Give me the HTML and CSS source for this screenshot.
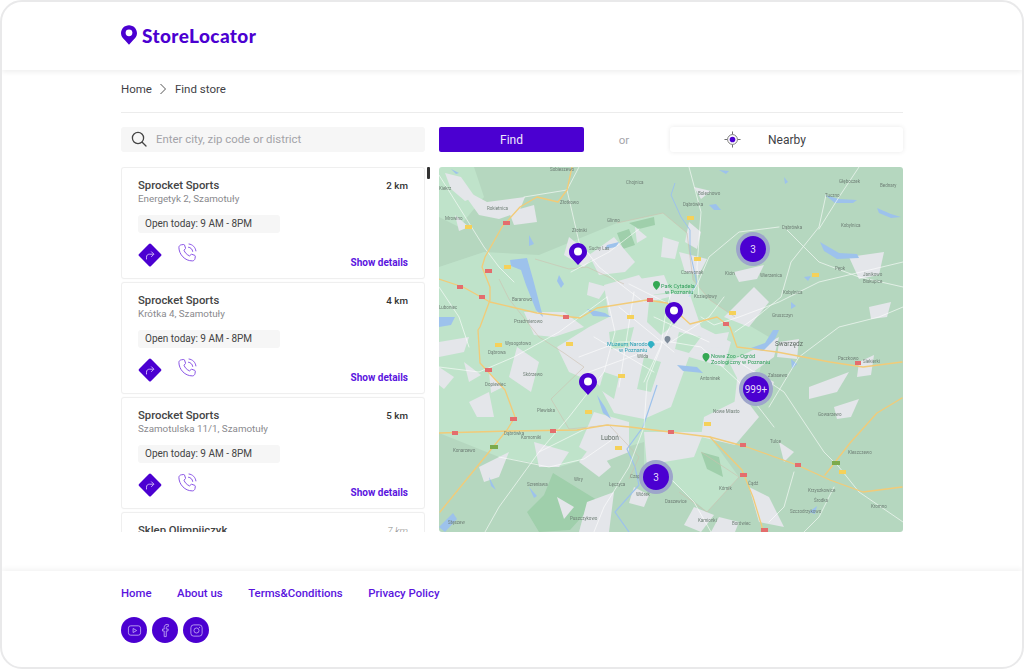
FILE: index.html
```html
<!DOCTYPE html>
<html lang="en">
<head>
<meta charset="utf-8">
<title>StoreLocator</title>
<link rel="stylesheet" href="styles.css">
</head>
<body>
<svg class="defs" width="0" height="0" aria-hidden="true">
  <symbol id="pin" viewBox="0 0 18 22"><path fill="#4b00d1" d="M9 0C4 0 0 4 0 9c0 3.4 1.8 5.4 4.2 7.7L9 22l4.8-5.300C16.200 14.400 18 12.400 18 9c0-5-4-9-9-9z"/><circle cx="9" cy="8.500" r="4" fill="#fff"/></symbol>
  <symbol id="go" viewBox="0 0 26 26"><rect x="4.500" y="4.500" width="17" height="17" rx="1.500" fill="#4b00d1" transform="rotate(45 13 13)"/><path d="M9.500 17v-1.800c0-2 1.200-3 3-3h4M14.500 9.800l2.400 2.400-2.400 2.400" fill="none" stroke="#c9b0f5" stroke-width="1" stroke-linecap="round" stroke-linejoin="round"/></symbol>
  <symbol id="phone" viewBox="0 0 20 20"><path d="M4.300 1.800 6.700 1.500c.4 0 .7.200.8.500l1 3c.1.300 0 .6-.2.800L7 7.200c.9 2.500 3 4.700 5.600 5.700l1.400-1.400c.2-.2.600-.3.900-.2l2.900 1.100c.3.100.5.500.5.800l-.3 2.400c-.2 1.200-1.300 2.300-2.600 2.300C8 18 1.900 11.500 1.900 4.300c0-1.200 1.100-2.300 2.400-2.500z" fill="none" stroke="#8a55e6" stroke-width="1"/><path d="M11.500 4.200c2.200.3 3.900 2 4.200 4.200M12 1c3.600.4 6.500 3.300 6.900 6.900" fill="none" stroke="#8a55e6" stroke-width="1" stroke-linecap="round"/></symbol>
</svg>
<div class="window">
  <header class="header">
    <div class="logo">
      <svg class="logo-pin" viewBox="0 0 18 22"><path fill="#4b00d1" d="M9 0C4 0 0 4 0 9c0 3.4 1.800 5.400 4.200 7.700L9 22l4.800-5.300C16.200 14.400 18 12.400 18 9c0-5-4-9-9-9z"/><circle cx="9" cy="8.500" r="3.800" fill="#fff"/></svg>
      <span class="logo-text">StoreLocator</span>
    </div>
  </header>

  <main class="main">
    <nav class="crumbs">
      <span>Home</span>
      <svg class="crumb-sep" viewBox="0 0 8 12"><path d="M1.500 1 6.500 6l-5 5" fill="none" stroke="#555" stroke-width="1"/></svg>
      <span>Find store</span>
    </nav>

    <div class="toolbar">
      <div class="search">
        <svg class="search-icon" viewBox="0 0 16 16"><circle cx="7" cy="7" r="5.600" fill="none" stroke="#444" stroke-width="1.300"/><path d="m11.200 11.200 3.800 3.800" stroke="#444" stroke-width="1.300" stroke-linecap="round"/></svg>
        <span>Enter city, zip code or district</span>
      </div>
      <div class="actions">
        <button class="find">Find</button>
        <span class="or">or</span>
        <button class="nearby">
          <svg class="target" viewBox="0 0 18 18"><circle cx="9" cy="9" r="5.200" fill="#fff" stroke="#777" stroke-width="1"/><circle cx="9" cy="9" r="3" fill="#4b00d1"/><path d="M9 .5v3M9 14.500v3M.5 9h3M14.500 9h3" stroke="#666" stroke-width="1"/></svg>
          <span>Nearby</span>
        </button>
      </div>
    </div>

    <div class="content">
      <div class="list-wrap">
        <div class="list">
          <article class="card">
            <div class="row"><h3>Sprocket Sports</h3><span class="km">2 km</span></div>
            <p class="addr">Energetyk 2, Szamotuły</p>
            <div class="hours">Open today: 9 AM - 8PM</div>
            <div class="foot">
              <div class="icons"><svg class="ic-go"><use href="#go"/></svg><svg class="ic-phone"><use href="#phone"/></svg></div>
              <a class="details">Show details</a>
            </div>
          </article>
          <article class="card">
            <div class="row"><h3>Sprocket Sports</h3><span class="km">4 km</span></div>
            <p class="addr">Krótka 4, Szamotuły</p>
            <div class="hours">Open today: 9 AM - 8PM</div>
            <div class="foot">
              <div class="icons"><svg class="ic-go"><use href="#go"/></svg><svg class="ic-phone"><use href="#phone"/></svg></div>
              <a class="details">Show details</a>
            </div>
          </article>
          <article class="card">
            <div class="row"><h3>Sprocket Sports</h3><span class="km">5 km</span></div>
            <p class="addr">Szamotulska 11/1, Szamotuły</p>
            <div class="hours">Open today: 9 AM - 8PM</div>
            <div class="foot">
              <div class="icons"><svg class="ic-go"><use href="#go"/></svg><svg class="ic-phone"><use href="#phone"/></svg></div>
              <a class="details">Show details</a>
            </div>
          </article>
          <article class="card">
            <div class="row"><h3>Sklep Olimpijczyk</h3><span class="km km-far">7 km</span></div>
          </article>
        </div>
        <div class="scroll-thumb"></div>
      </div>

      <div class="map">
        <svg class="map-art" viewBox="0 0 464 365" preserveAspectRatio="none">
          <rect width="464" height="365" fill="#b5d7bf"/>
          <g fill="#bfe3ca">
            <path d="M0 100 45 85 100 88 178 56 224 46 248 66 254 113 271 133 296 150 330 170 305 262 271 270 300 310 268 345 231 313 205 300 205 275 120 300 60 290 0 266z"/>
            <path d="M0 0 35 0 45 30 20 60 0 50z"/>
          </g>
          <g fill="#9fcfab">
            <path d="M114 306 158 333 131 363 100 365 88 345 105 328z"/>
            <path d="M190 56 215 50 216 58 200 62z"/>
            <path d="M178 66 190 62 196 78 184 82z"/>
            <path d="M262 285 280 290 284 310 268 302z"/>
          </g>
          <g fill="#e4e6ea">
            <path d="M165 118 200 108 215 128 250 125 262 160 292 175 285 200 250 190 232 240 205 252 175 246 160 218 130 205 118 180 150 160 170 150z"/>
            <path d="M150 88 175 70 196 95 186 105 160 108z"/>
            <path d="M20 20 48 35 86 30 80 45 60 52 40 48z"/>
            <path d="M6 6 22 10 36 30 26 34 12 22z"/>
            <path d="M85 145 125 145 145 160 115 170 95 168z"/>
            <path d="M0 175 30 170 25 185 0 190z"/>
            <path d="M240 85 268 92 260 108 246 105z"/>
            <path d="M224 70 240 75 236 92 222 90z"/>
            <path d="M250 55 262 65 258 82 246 75z"/>
            <path d="M150 115 168 120 160 132 148 128z"/>
            <path d="M200 112 225 108 232 125 212 128z"/>
            <path d="M285 150 315 120 330 135 310 160z"/>
            <path d="M295 105 325 98 318 112 300 115z"/>
            <path d="M340 175 360 172 358 192 338 190z"/>
            <path d="M410 90 445 85 440 108 420 112z"/>
            <path d="M78 180 100 195 92 225 70 210z"/>
            <path d="M25 195 42 208 30 215z"/>
            <path d="M30 235 50 225 55 250 38 250z"/>
            <path d="M95 275 130 285 120 300 100 300z"/>
            <path d="M155 245 190 255 190 285 165 295 140 280z"/>
            <path d="M205 265 265 265 255 290 225 295 208 300z"/>
            <path d="M265 250 305 230 320 250 296 278 262 270z"/>
            <path d="M290 195 340 170 335 190 300 215z"/>
            <path d="M300 195 335 215 328 235 295 240z"/>
            <path d="M370 220 410 205 398 225 370 232z"/>
            <path d="M340 275 355 285 345 295z"/>
            <path d="M420 195 435 188 432 208 418 210z"/>
            <path d="M148 335 175 325 170 365 140 365z"/>
            <path d="M195 320 210 328 205 340 190 336z"/>
            <path d="M255 340 275 348 262 365 245 358z"/>
            <path d="M310 320 330 330 345 360 320 355z"/>
            <path d="M280 350 300 355 296 365 272 365z"/>
            <path d="M155 275 172 300 160 310 140 295z"/>
            <path d="M70 45 95 38 98 55 75 58z"/>
            <path d="M130 70 155 90 145 100 125 88z"/>
            <path d="M40 300 70 285 60 310 45 315z"/>
            <path d="M0 200 15 210 5 222 0 218z"/>
            <path d="M260 170 290 165 286 180 258 182z"/>
            <path d="M255 20 272 24 262 32z"/>
            <path d="M430 140 452 135 448 150 432 152z"/>
            <path d="M50 205 64 220 52 226z"/>
            <path d="M118 330 135 340 125 352z"/>
            <path d="M395 240 420 232 412 250 398 252z"/>
            <path d="M16 48 30 60 20 64z"/>
            <path d="M196 60 208 70 198 76z"/>
          </g>
          <g fill="#bfe3ca">
            <path d="M210 135 230 130 238 155 222 168 208 155z"/>
            <path d="M170 165 195 160 190 180 172 182z"/>
            <path d="M205 190 222 195 212 225 198 222z"/>
            <path d="M240 165 262 170 250 186 236 182z"/>
            <path d="M165 205 180 210 175 232 160 222z"/>
          </g>
          <g fill="#9dc2ec">
            <path d="M71 93 88 91 94 112 104 150 97 143 87 118 82 103 72 99z"/>
            <path d="M381 75 400 86 418 87 420 91 398 92 385 84z"/>
            <path d="M386 28 400 32 418 33 414 36 396 36z"/>
            <path d="M438 41 452 47 462 50 452 51 440 46z"/>
            <path d="M334 163 326 176 312 181 324 184 336 172 340 163z"/>
            <path d="M238 198 258 200 264 206 244 204z"/>
            <path d="M158 228 166 240 172 252 164 246z"/>
            <path d="M120 108 125 117 122 121 118 114z"/>
            <path d="M90 68 95 77 90 79z"/>
            <path d="M148 142 166 146 172 150 154 149z"/>
            <path d="M168 78 180 75 177 80 166 82z"/>
            <path d="M0 150 16 150 12 158 0 160z"/>
            <path d="M12 2 20 6 17 7z"/>
            <path d="M280 3 290 4 287 7z"/>
            <path d="M270 38 277 37 282 43 275 43z"/>
            <path d="M345 10 349 15 346 17z"/>
            <path d="M365 110 372 109 369 114z"/>
            <path d="M352 135 357 139 352 142z"/>
            <path d="M352 192 358 197 353 202z"/>
            <path d="M50 310 57 323 52 319z"/>
            <path d="M90 320 98 329 95 331z"/>
            <path d="M370 345 378 339 376 347z"/>
            <path d="M0 360 14 346 18 352 6 365z"/>
          </g>
          <path d="M236 16 232 28 242 50 251 63 251 85 258 116 250 130" fill="none" stroke="#9dc2ec" stroke-width="1"/>
          <path d="M218 218 204 260 188 282 196 300 200 318 176 345 190 365" fill="none" stroke="#9dc2ec" stroke-width="1.200"/>
          <path class="border-line" d="M178 56 224 46 248 66 254 113 271 133 296 150M96 92 130 102 148 100 185 117M60 112 70 132 100 170 125 186 145 200 112 232 130 262 150 260 170 258 200 290 190 312M262 285 300 310 268 345 240 325"/>
          <g class="roads">
            <path d="M0 8 20 40 45 80 60 100 75 115M128 23 140 75 160 100 185 120 205 135"/>
            <path d="M85 30 128 23 140 0M250 0 262 45 258 100 260 130"/>
            <path d="M132 105 170 85 200 62M190 117 228 136"/>
            <path d="M262 150 275 158 300 150 340 135 380 115 464 95"/>
            <path d="M387 28 380 60 352 95 342 130 320 148 296 165"/>
            <path d="M345 60 380 95 420 110 464 120M420 0 400 30 380 62"/>
            <path d="M140 190 180 175 232 175 262 180 300 215 335 260"/>
            <path d="M232 125 226 150 222 180 208 215 205 260"/>
            <path d="M168 130 176 165 165 205 130 250 100 285 60 340 46 365"/>
            <path d="M0 200 40 205 75 190 120 165 168 130"/>
            <path d="M232 175 270 150 285 130"/>
            <path d="M100 285 150 260"/>
            <path d="M205 260 190 300 165 340 155 365"/>
            <path d="M60 290 110 300 145 292 180 268"/>
            <path d="M230 310 255 335 272 365M300 195 345 225 385 285 400 300 420 325 464 355"/>
            <path d="M330 240 360 190 400 160 440 150 464 140"/>
            <path d="M355 305 345 340 330 355M395 320 380 350 365 365"/>
            <path d="M250 130 258 118 270 90 300 65 340 60"/>
            <path d="M0 120 20 150 30 180"/>
            <path d="M180 140 235 185M155 170 215 205M195 125 180 220M240 140 205 215M150 205 205 185M215 150 270 175"/>
          </g>
          <g class="highways">
            <path d="M133 0 128 23 119 35 98 30 81 40 63 60 46 90 43 100 51 120 51 133 41 160 39 163 41 196 66 223 76 250 68 263 41 296 1 345"/>
            <path d="M0 112 24 120 51 135 98 146 141 151 158 141 208 133 228 136 251 157 278 150 291 160 298 180 338 185 391 195 424 200 463 195"/>
            <path d="M0 266 71 264 138 263 168 258 191 260 231 265 271 270 308 280 358 298 391 313 424 325 463 320"/>
            <path d="M271 270 303 303 314 330 324 363"/>
            <path d="M463 231 438 246 411 276 386 308"/>
          </g>
          <g fill="#e46d6d">
            <rect x="64" y="54" width="7" height="4"/><rect x="46" y="102" width="7" height="4"/><rect x="18" y="118" width="6" height="4"/><rect x="40" y="128" width="6" height="4"/><rect x="124" y="148" width="6" height="4"/><rect x="208" y="131" width="6" height="4"/><rect x="284" y="155" width="6" height="4"/><rect x="416" y="194" width="6" height="4"/><rect x="46" y="201" width="7" height="4"/><rect x="71" y="250" width="7" height="4"/><rect x="13" y="264" width="6" height="4"/><rect x="111" y="262" width="6" height="4"/><rect x="229" y="263" width="6" height="4"/><rect x="301" y="276" width="6" height="4"/><rect x="356" y="296" width="6" height="4"/><rect x="301" y="306" width="7" height="4"/><rect x="322" y="361" width="7" height="4"/>
          </g>
          <g fill="#f5d15a">
            <rect x="26" y="58" width="7" height="4"/><rect x="65" y="98" width="7" height="4"/><rect x="248" y="49" width="7" height="4"/><rect x="255" y="90" width="7" height="4"/><rect x="373" y="106" width="7" height="4"/><rect x="188" y="148" width="7" height="4"/><rect x="290" y="144" width="7" height="4"/><rect x="56" y="176" width="7" height="4"/><rect x="127" y="175" width="7" height="4"/><rect x="179" y="207" width="7" height="4"/><rect x="146" y="243" width="7" height="4"/><rect x="265" y="255" width="7" height="4"/><rect x="176" y="279" width="7" height="4"/><rect x="400" y="303" width="7" height="4"/>
          </g>
          <g fill="#7cab4c"><rect x="51" y="278" width="8" height="4"/><rect x="393" y="294" width="8" height="4"/></g>
          <g class="lbl">
            <text x="111" y="4">Sobieszewo</text><text x="187" y="17">Chojnica</text><text x="259" y="28">Bolechowo</text><text x="244" y="39">Dąbrówka</text><text x="121" y="37">Złotkowo</text><text x="48" y="43">Rokietnica</text><text x="6" y="53">Mrowino</text><text x="0" y="23">Kiekrz</text><text x="168" y="55">Glinno</text><text x="133" y="65">Złotniki</text><text x="150" y="83">Suchy Las</text><text x="343" y="62">Dąbrówka</text><text x="402" y="60">Kobylnica</text><text x="400" y="16">Głęboczek</text><text x="441" y="20">Bednary</text><text x="386" y="30">Tuczno</text><text x="424" y="109">Janikowo</text><text x="396" y="103">Pępk</text><text x="424" y="116">Biskupice</text><text x="242" y="107">Czerwonak</text><text x="286" y="108">Kicin</text><text x="321" y="110">Wierzenica</text><text x="344" y="127">Kobylnica</text><text x="255" y="131">Koziegłowy</text><text x="333" y="150">Gruszczyn</text><text x="73" y="134">Baranowo</text><text x="0" y="142">Luboniec</text><text x="75" y="156">Przeźmierowo</text><text x="66" y="178">Wysogotowo</text><text x="49" y="187">Dąbrowa</text><text x="84" y="209">Skórzewo</text><text x="46" y="219">Dopiewiec</text><text x="98" y="245">Plewiska</text><text x="65" y="268">Dąbrówka</text><text x="82" y="272">Komorniki</text><text x="14" y="285">Konarzewo</text><text x="135" y="314">Wiry</text><text x="88" y="319">Szreniawa</text><text x="170" y="319">Łęczyca</text><text x="191" y="311">Czapury</text><text x="197" y="329">Wiórek</text><text x="226" y="336">Daszewice</text><text x="131" y="353">Puszczykowo</text><text x="9" y="357">Stęszew</text><text x="280" y="323">Kórnik</text><text x="309" y="318">Ćądź</text><text x="259" y="355">Kamionki</text><text x="293" y="358">Borówiec</text><text x="369" y="325">Krzyszkowice</text><text x="375" y="335">Środka</text><text x="351" y="346">Szczodrzykowo</text><text x="432" y="341">Kromno</text><text x="379" y="249">Gowarzewo</text><text x="331" y="276">Tulce</text><text x="409" y="287">Kleszczewo</text><text x="399" y="193">Paczkowo</text><text x="424" y="196">Siekierki</text><text x="329" y="210">Zalasewo</text><text x="261" y="213">Antoninek</text><text x="274" y="246">Nowe Miasto</text><text x="198" y="191">Wilda</text>
          </g>
          <g class="lbl lbl-big"><text x="162" y="273">Luboń</text><text x="336" y="179">Swarzędz</text></g>
          <g class="lbl lbl-green"><text x="222" y="121">Park Cytadela</text><text x="226" y="127">w Poznaniu</text><text x="272" y="191">Nowe Zoo - Ogród</text><text x="272" y="197">Zoologiczny w Poznaniu</text></g>
          <g class="lbl lbl-teal"><text x="168" y="179">Muzeum Narodowe</text><text x="180" y="185">w Poznaniu</text></g>
          <g fill="#34a853"><path d="M217.500 114a3.500 3.500 0 0 1 3.500 3.500c0 2.300-3.500 5.500-3.500 5.500s-3.500-3.200-3.500-5.500a3.500 3.500 0 0 1 3.500-3.500z"/><path d="M267 186a3.500 3.500 0 0 1 3.500 3.500c0 2.300-3.500 5.500-3.500 5.500s-3.500-3.200-3.500-5.500a3.500 3.500 0 0 1 3.500-3.500z"/></g>
          <path d="M212 174a3 3 0 0 1 3 3c0 2-3 4.500-3 4.500s-3-2.500-3-4.500a3 3 0 0 1 3-3z" fill="#2fb0c4"/>
          <path d="M228.500 169a3 3 0 0 1 3 3c0 2-3 4.500-3 4.500s-3-2.500-3-4.500a3 3 0 0 1 3-3z" fill="#7d8a99"/>
        </svg>

        <svg class="pin pin-a"><use href="#pin"/></svg>
        <svg class="pin pin-b"><use href="#pin"/></svg>
        <svg class="pin pin-c"><use href="#pin"/></svg>
        <div class="cluster cluster-a"><span>3</span></div>
        <div class="cluster cluster-b"><span>999+</span></div>
        <div class="cluster cluster-c"><span>3</span></div>
      </div>
    </div>
  </main>

  <footer class="footer">
    <nav class="foot-links">
      <a>Home</a><a>About us</a><a>Terms&amp;Conditions</a><a>Privacy Policy</a>
    </nav>
    <div class="social">
      <span class="soc"><svg viewBox="0 0 16 16"><rect x="1.500" y="3" width="13" height="10" rx="2.500" fill="none" stroke="#b99cf0" stroke-width="1"/><path d="M6.500 5.800v4.400L10.300 8z" fill="none" stroke="#b99cf0" stroke-width="1" stroke-linejoin="round"/></svg></span>
      <span class="soc"><svg viewBox="0 0 16 16"><path d="M9.800 1.500c-2 0-3.200 1.200-3.200 3.200v1.800H4.800v2h1.800v6h2.200v-6h1.800l.3-2H8.800V5c0-.8.400-1.300 1.200-1.300h1V1.600z" fill="none" stroke="#b99cf0" stroke-width="1" stroke-linejoin="round"/></svg></span>
      <span class="soc"><svg viewBox="0 0 16 16"><rect x="2" y="2" width="12" height="12" rx="3" fill="none" stroke="#b99cf0" stroke-width="1"/><circle cx="8" cy="8" r="2.700" fill="none" stroke="#b99cf0" stroke-width="1"/><circle cx="11.300" cy="4.700" r=".6" fill="#b99cf0"/></svg></span>
    </div>
  </footer>
</div>
</body>
</html>
```
FILE: styles.css
```css
* { box-sizing: border-box; }
html, body { margin: 0; padding: 0; background: #fff; }
body { font-family: Roboto, "Liberation Sans", sans-serif; color: #3f3f46; }
.defs { position: absolute; }

.window {
  width: 1024px;
  height: 669px;
  border: 2px solid #e9e9ea;
  border-radius: 22px;
  display: flex;
  flex-direction: column;
  overflow: hidden;
  background: #fff;
}

.header {
  height: 68px;
  flex: none;
  padding-left: 119px;
  display: flex;
  align-items: center;
  box-shadow: 0 2px 5px rgba(0, 0, 0, .07);
  position: relative;
}
.logo { display: flex; align-items: center; gap: 5px; margin-top: -2px; }
.logo-pin { width: 16px; height: 20px; }
.logo-text { font-family: Lato, sans-serif; font-weight: 900; font-size: 19px; color: #4b00d1; letter-spacing: .4px; }

.main { flex: 1; padding: 0 119px; display: flex; flex-direction: column; min-height: 0; }

.crumbs {
  height: 43px;
  flex: none;
  display: flex;
  align-items: center;
  gap: 6.500px;
  font-size: 11.500px;
  border-bottom: 1px solid #ececec;
  padding-bottom: 5px;
}
.crumb-sep { width: 8px; height: 12px; margin: 0 1px; }

.toolbar { margin-top: 14px; height: 25px; flex: none; display: flex; gap: 14px; }
.search {
  width: 304px;
  flex: none;
  background: #f6f6f6;
  border-radius: 3px;
  display: flex;
  align-items: center;
  padding-left: 10px;
  padding-bottom: 1px;
  gap: 9px;
  font-size: 11.400px;
  color: #a3a3a8;
}
.search-icon { width: 16px; height: 16px; }
.actions { flex: 1; display: flex; align-items: stretch; }
.find {
  width: 145px;
  border: 0;
  border-radius: 2px;
  background: #4b00d1;
  color: #efe8fc;
  font: 400 12px Roboto, sans-serif;
}
.or { width: 80px; display: flex; align-items: center; justify-content: center; font-size: 11.500px; color: #a5a5aa; margin-right: 6px; }
.nearby {
  flex: 1;
  border: 0;
  border-radius: 3px;
  background: #fff;
  box-shadow: 0 0 5px rgba(0, 0, 0, .09);
  font: 400 12px Roboto, sans-serif;
  color: #3f3f46;
  display: flex;
  align-items: center;
  padding-left: 54px;
  gap: 27px;
}
.target { width: 17px; height: 17px; }

.content { margin-top: 15px; height: 365px; flex: none; display: flex; gap: 14px; }

.list-wrap { width: 304px; flex: none; position: relative; }
.list { height: 100%; overflow: hidden; display: flex; flex-direction: column; gap: 3px; }
.scroll-thumb { position: absolute; right: -5px; top: 0; width: 3px; height: 12px; background: #333; border-radius: 1px; }
.card {
  height: 112px;
  flex: none;
  border: 1px solid #efefef;
  border-radius: 3px;
  padding: 11px 16px 0;
  background: #fff;
  box-shadow: 0 0 2px rgba(0, 0, 0, .04);
}
.row { display: flex; justify-content: space-between; align-items: center; height: 13px; }
h3 { margin: 0; font-size: 11.300px; font-weight: 500; color: #444; }
.km { font-size: 9.800px; font-weight: 500; color: #333; }
.km-far { font-style: italic; font-weight: 300; color: #8a8a8a; }
.addr { margin: 0; font-size: 9.800px; line-height: 13px; color: #8a8a8e; }
.hours {
  margin-top: 10px;
  width: 142px;
  height: 18px;
  background: #f6f6f6;
  border-radius: 3px;
  padding-left: 7px;
  font-size: 10px;
  line-height: 18px;
  color: #444;
}
.foot { margin-top: 9px; display: flex; justify-content: space-between; align-items: flex-end; height: 32px; }
.icons { display: flex; align-items: flex-start; gap: 14px; align-self: flex-start; }
.ic-go { width: 26px; height: 26px; margin-left: -1px; }
.ic-phone { width: 20px; height: 20px; margin-top: 1px; }
.details { font-size: 10px; font-weight: 700; color: #5a14de; line-height: 13px; margin-bottom: 5px; }

.map { flex: 1; position: relative; border-radius: 3px; overflow: hidden; }
.map-art { display: block; width: 100%; height: 100%; filter: blur(.45px); }
.border-line { fill: none; stroke: #cdbfae; stroke-width: .6; }
.roads { fill: none; stroke: #fff; stroke-width: .75; stroke-linejoin: round; stroke-linecap: round; opacity: .8; }
.highways { fill: none; stroke: #f2cb78; stroke-width: 1.300; stroke-linejoin: round; stroke-linecap: round; }
.lbl { font-family: Roboto, sans-serif; font-size: 4.500px; fill: #6f7f76; }
.lbl-big { font-size: 6.500px; fill: #5d6a62; }
.lbl-green { font-size: 5.500px; fill: #2f9e5a; }
.lbl-teal { font-size: 5.500px; fill: #2a9fb5; }

.pin { position: absolute; width: 18px; height: 22px; }
.pin-a { left: 130px; top: 76px; }
.pin-b { left: 226px; top: 135px; }
.pin-c { left: 140px; top: 206px; }
.cluster {
  position: absolute;
  width: 34px;
  height: 34px;
  border-radius: 50%;
  background: #9da5cb;
  display: flex;
  align-items: center;
  justify-content: center;
}
.cluster span {
  width: 26px;
  height: 26px;
  border-radius: 50%;
  background: #4b00d1;
  color: #e6dcfa;
  font-size: 10px;
  display: flex;
  align-items: center;
  justify-content: center;
  white-space: nowrap;
}
.cluster-a { left: 297px; top: 65px; }
.cluster-b { left: 300px; top: 205px; }
.cluster-c { left: 200px; top: 293px; }

.footer {
  flex: none;
  height: 96px;
  padding: 15px 119px 0;
  box-shadow: 0 -2px 5px rgba(0, 0, 0, .05);
  position: relative;
}
.foot-links { display: flex; gap: 25.500px; font-size: 11.400px; font-weight: 500; color: #5a14de; line-height: 15px; }
.social { display: flex; gap: 5px; margin-top: 16px; }
.soc {
  width: 26px;
  height: 26px;
  border-radius: 50%;
  background: #4b00d1;
  display: flex;
  align-items: center;
  justify-content: center;
}
.soc svg { width: 15px; height: 15px; }
```
